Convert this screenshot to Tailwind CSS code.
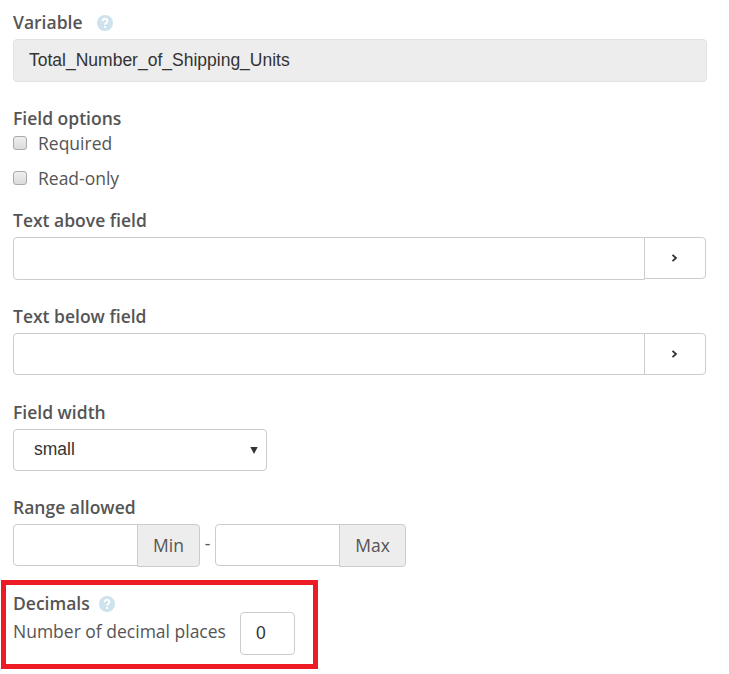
<!DOCTYPE html>
<html lang="en">
<head>
<meta charset="utf-8">
<title>Field settings</title>
<script src="https://cdn.jsdelivr.net/npm/@tailwindcss/browser@4"></script>
</head>
<body class="bg-white">
<form class="flex h-[674px] w-[729px] flex-col overflow-hidden pt-[10px] font-['Open_Sans',sans-serif] text-[17.5px] leading-6 text-[#555]">
  <section class="ml-[13px] h-24 w-[694px]">
    <div class="flex h-[29px] items-start font-semibold">
      <span class="w-[84px]">Variable</span>
      <svg class="mt-[5px] size-4" viewBox="0 0 16 16"><circle cx="8" cy="8" r="8" fill="#cde2ec"/><path d="M5.600 6.200C5.600 3 10.400 3 10.400 6c0 1.900-2.400 1.900-2.400 3.700" fill="none" stroke="#fff" stroke-width="1.900"/><rect x="7" y="11" width="2" height="2" fill="#fff"/></svg>
    </div>
    <div class="h-[43px] rounded border border-[#e2e2e2] bg-[#ededed] px-[15px] font-['Liberation_Sans',sans-serif] leading-[41px] text-[#333]">Total_Number_of_Shipping_Units</div>
  </section>
  <section class="ml-[13px] h-[102px]">
    <div class="h-[25px] font-semibold">Field options</div>
    <label class="flex h-[35px]"><span class="mt-[5px] mr-[11px] size-[14px] rounded-[3px] border border-[#ababab] bg-linear-to-b from-[#eee] to-[#dcdcdc]"></span>Required</label>
    <label class="flex h-[35px]"><span class="mt-[5px] mr-[11px] size-[14px] rounded-[3px] border border-[#ababab] bg-linear-to-b from-[#eee] to-[#dcdcdc]"></span>Read-only</label>
  </section>
  <section class="ml-[13px] h-24 w-[693px]">
    <div class="h-[29px] font-semibold">Text above field</div>
    <div class="flex items-start">
      <div class="h-[43px] w-[632px] rounded-l border border-[#ccc]"></div>
      <div class="-ml-px flex h-[42px] w-[62px] items-center justify-center rounded-r border border-[#ccc]"><svg class="size-[8px]" viewBox="0 0 8 8"><path d="M1.500 .8 5 4 1.500 7.200" fill="none" stroke="#333" stroke-width="1.800"/></svg></div>
    </div>
  </section>
  <section class="ml-[13px] h-24 w-[693px]">
    <div class="h-[29px] font-semibold">Text below field</div>
    <div class="flex items-start">
      <div class="h-[42px] w-[632px] rounded-l border border-[#ccc]"></div>
      <div class="-ml-px flex h-[42px] w-[62px] items-center justify-center rounded-r border border-[#ccc]"><svg class="size-[8px]" viewBox="0 0 8 8"><path d="M1.500 .8 5 4 1.500 7.200" fill="none" stroke="#333" stroke-width="1.800"/></svg></div>
    </div>
  </section>
  <section class="ml-[13px] h-[95px]">
    <div class="h-[29px] font-semibold">Field width</div>
    <div class="flex h-[42px] w-[254px] items-center justify-between rounded border border-[#ccc] pr-[8px] pl-5 font-['Liberation_Sans',sans-serif] text-[#333]">
      <span class="-mt-[2px]">small</span>
      <svg class="h-[7px] w-[8px]" viewBox="0 0 8 7"><path d="M.3 0h7.400L4 7z" fill="#333"/></svg>
    </div>
  </section>
  <section class="ml-[13px] h-[85px]">
    <div class="h-[29px] font-semibold">Range allowed</div>
    <div class="flex items-start">
      <div class="h-[42px] w-[125px] rounded-l border border-[#ccc]"></div>
      <div class="-ml-px h-[43px] w-[63px] rounded-r border border-[#ccc] bg-[#ededed] text-center leading-[41px]">Min</div>
      <div class="w-[15px] text-center leading-[38px]">-</div>
      <div class="h-[42px] w-[125px] rounded-l border border-[#ccc]"></div>
      <div class="-ml-px h-[43px] w-[67px] rounded-r border border-[#ccc] bg-[#ededed] text-center leading-[41px]">Max</div>
    </div>
  </section>
  <section class="ml-px flex h-[89px] w-[317px] items-start border-[5px] border-[#ed1c24] pl-[7px]">
    <div class="mt-[6px] w-[227px]">
      <div class="flex h-7 font-semibold"><span class="w-[86px]">Decimals</span>
        <svg class="mt-[5px] size-4" viewBox="0 0 16 16"><circle cx="8" cy="8" r="8" fill="#cde2ec"/><path d="M5.600 6.200C5.600 3 10.400 3 10.400 6c0 1.900-2.400 1.900-2.400 3.700" fill="none" stroke="#fff" stroke-width="1.900"/><rect x="7" y="11" width="2" height="2" fill="#fff"/></svg>
      </div>
      <div class="whitespace-nowrap">Number of decimal places</div>
    </div>
    <div class="mt-[27px] h-[43px] w-[55px] rounded border border-[#ccc] pl-[15px] font-['Liberation_Sans',sans-serif] leading-[41px] text-[#333]">0</div>
  </section>
</form>
</body>
</html>
